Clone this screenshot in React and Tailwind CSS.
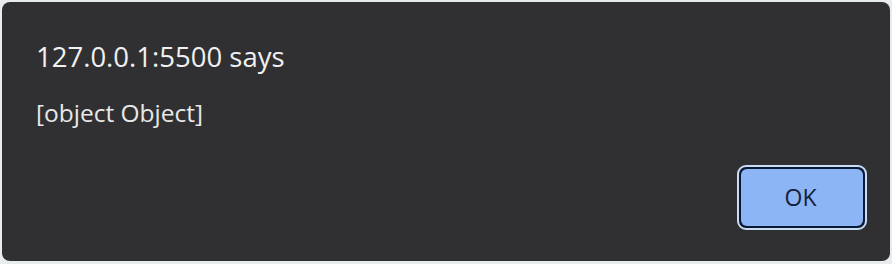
export default function App() {
  return (
    <div className="w-[892px] h-[264px] bg-[#e9ecef] pt-[2px] pl-[2px] pr-[2px] pb-[3px]" style={{ fontFamily: '"Open Sans", "Noto Sans", sans-serif' }}>
      <div className="h-full w-full rounded-[8px] bg-[#303032] flex flex-col pl-[34px] pr-[23px] pt-[38px] pb-[31px]">
        <div className="text-[27.5px] leading-[34px] text-[#f1f1f1]">127.0.0.1:5500 says</div>
        <div className="mt-[24px] text-[24.5px] leading-[30px] text-[#e8e8e8]">[object Object]</div>
        <div className="mt-auto flex justify-end">
          <button className="w-[130px] h-[65px] rounded-[9px] border-[2px] border-[#c9dcf7] bg-[#0b1a33] p-[2px]">
            <span className="flex h-full w-full items-center justify-center rounded-[6px] bg-[#8cb5f6] pr-[3px] text-[23px] text-[#14213a]">OK</span>
          </button>
        </div>
      </div>
    </div>
  );
}
